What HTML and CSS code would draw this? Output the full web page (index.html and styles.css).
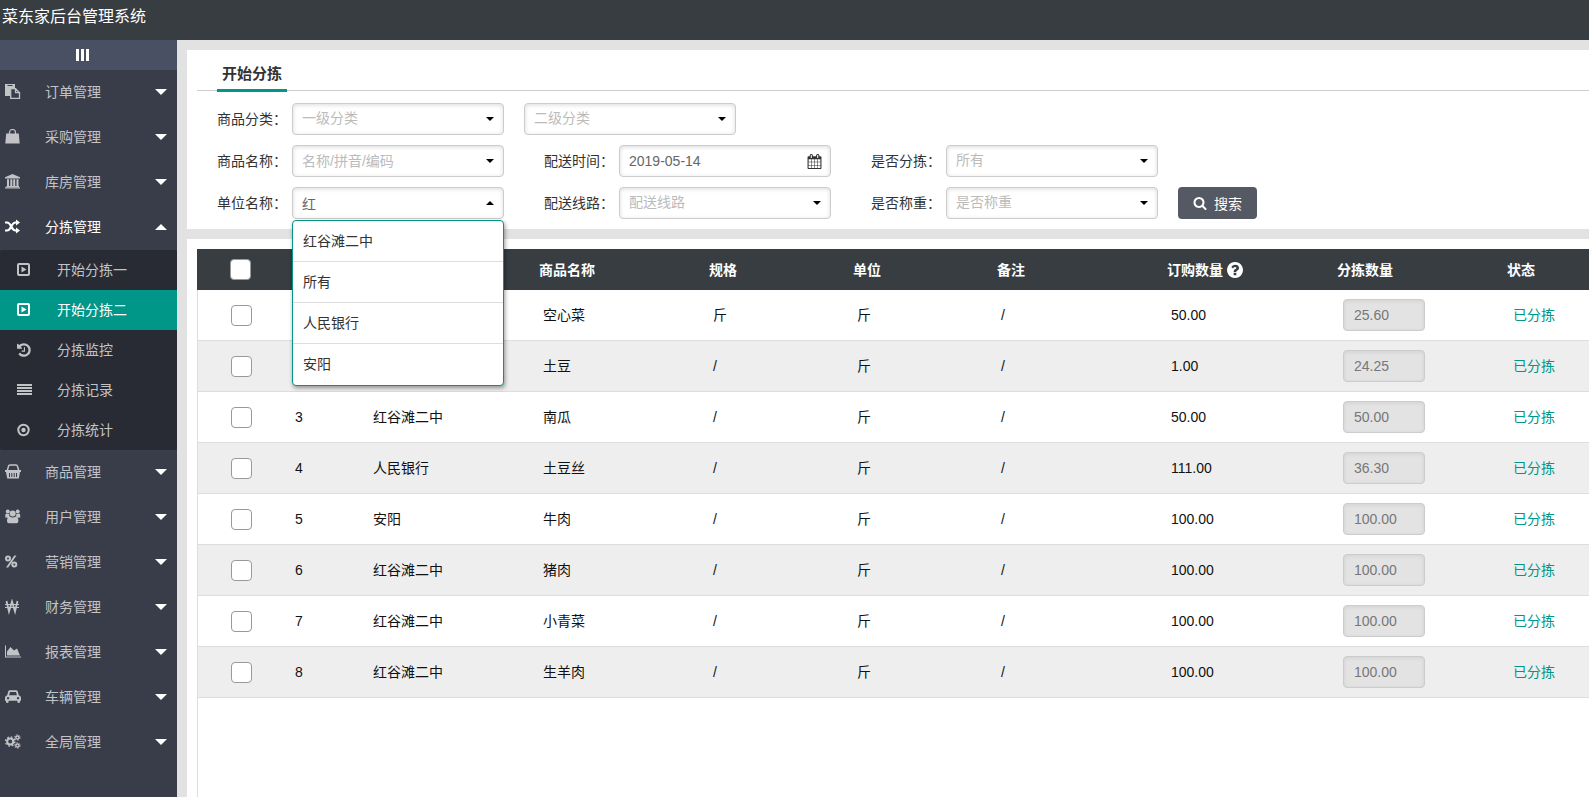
FILE: index.html
```html
<!DOCTYPE html>
<html lang="zh-CN">
<head>
    <meta charset="UTF-8">
    <meta name="viewport" content="width=device-width, initial-scale=1.0">
    <title>菜东家后台管理系统</title>
    <link rel="stylesheet" href="styles.css">
</head>
<body>
    <svg class="sprite" aria-hidden="true">
        <symbol id="i-paste" viewBox="0 0 16 16"><path d="M0 0h10v4H5v8H0zM2.500 1v1h5V1z" fill-rule="evenodd"/><path d="M5.700 4.700h4.800v4h4v5.600H5.700zM10.500 4.700l4 4" fill="none" stroke="currentColor" stroke-width="1.300"/></symbol>
        <symbol id="i-bag" viewBox="0 0 16 16"><path d="M1.200 4.500h12.600l.9 10H.3z"/><path d="M4.500 6.500V3.500a3 3 0 0 1 6 0v3" fill="none" stroke="currentColor" stroke-width="1.200"/></symbol>
        <symbol id="i-bank" viewBox="0 0 16 16"><path d="M7.500 0L15 3.200V4.500H0V3.200zM2 5.200h2v6.800h1.300V5.200h2v6.800h.9V5.200h2v6.800h1.300V5.200h2v6.800h.5v1H1.300v-1H2zM0 13.300h15V14.500H0z"/></symbol>
        <symbol id="i-random" viewBox="0 0 16 16"><path d="M0 3.500h2C6.500 3.500 6 11.500 10.500 11.500H12M0 11.500h2C6.500 11.500 6 3.500 10.500 3.500H12" fill="none" stroke="currentColor" stroke-width="2.200"/><path d="M11 .5L15 3.500l-4 3zM11 8.500L15 11.500l-4 3z"/></symbol>
        <symbol id="i-play" viewBox="0 0 16 16"><rect x="1" y="2" width="11" height="11" rx="1" fill="none" stroke="currentColor" stroke-width="2"/><path d="M4.500 4.500l5 3-5 3z"/></symbol>
        <symbol id="i-history" viewBox="128 0 1792 1792"><path d="M1664 896q0 156-61 298t-164 245-245 164-298 61q-172 0-327-72.500t-264-204.500q-7-10-6.500-22.500t8.500-20.500l137-138q10-9 25-9 16 2 23 12 73 95 179 147t225 52q104 0 198.500-40.500t163.500-109.500 109.500-163.500 40.500-198.500-40.500-198.500-109.500-163.500-163.500-109.500-198.500-40.500q-98 0-188 35.500t-160 101.500l137 138q31 30 14 69-17 40-59 40h-448q-26 0-45-19t-19-45v-448q0-42 40-59 39-17 69 14l130 129q107-101 244.500-156.500t284.500-55.500q156 0 298 61t245 164 164 245 61 298zm-640-288v448q0 14-9 23t-23 9h-320q-14 0-23-9t-9-23v-64q0-14 9-23t23-9h224v-352q0-14 9-23t23-9h64q14 0 23 9t9 23z"/></symbol>
        <symbol id="i-lines" viewBox="0 0 16 16"><path d="M0 2h15v2H0zM0 5h15v2H0zM0 8h15v2H0zM0 11h15v2H0z"/></symbol>
        <symbol id="i-dot" viewBox="0 0 16 16"><circle cx="6.500" cy="8" r="5.200" fill="none" stroke="currentColor" stroke-width="2"/><circle cx="6.500" cy="8" r="2.200"/></symbol>
        <symbol id="i-basket" viewBox="0 0 16 16"><path d="M0 6h16v2h-1l-1.200 6.500H2.200L1 8H0zM4 9v4h1V9zm2.300 0v4h1V9zm2.400 0v4h1V9zM11 9v4h1V9z" fill-rule="evenodd"/><path d="M2.300 6.500L3.500 2.200Q3.800 1 5 1h6q1.200 0 1.500 1.200l1.200 4.300" fill="none" stroke="currentColor" stroke-width="1.500"/></symbol>
        <symbol id="i-users" viewBox="0 0 16 16"><circle cx="2.800" cy="2.500" r="2"/><circle cx="12.700" cy="2.500" r="2"/><circle cx="7.700" cy="4.500" r="3"/><path d="M.3 8.500V6q0-1.500 1.200-1.500 1.300.8 2.600.3Q4 7 5 7.700q-1.500 0-2.400 1zM15.200 8.500V6q0-1.500-1.200-1.500-1.300.8-2.600.3Q11.500 7 10.500 7.700q1.500 0 2.400 1zM4.500 7.500q3.200 1.800 6.400 0 2.500.5 2.500 4.500 0 2.300-2 2.300H4q-2 0-2-2.300Q2 8 4.500 7.500z"/></symbol>
        <symbol id="i-percent" viewBox="0 0 16 16"><circle cx="3" cy="4.500" r="2" fill="none" stroke="currentColor" stroke-width="2"/><circle cx="9.300" cy="10.500" r="2" fill="none" stroke="currentColor" stroke-width="2"/><path d="M9.300 1.500h2.200L3.200 13.500H1z"/></symbol>
        <symbol id="i-won" viewBox="0 0 16 16"><path d="M1.500 2l2.500 10.500L7 2.500l3 10L12.500 2" fill="none" stroke="currentColor" stroke-width="1.800"/><path d="M0 5.500h14M0 8.500h14" fill="none" stroke="currentColor"/></symbol>
        <symbol id="i-chart" viewBox="0 0 16 16"><path d="M0 1.500h1v11h15v1H0zM2 11.500V7.500L5.500 3 9 6.500l3-2 3 7z"/></symbol>
        <symbol id="i-car" viewBox="0 0 16 16"><path d="M3.200 2.500Q3.600 1.200 5 1.200h6q1.400 0 1.800 1.300L13.800 6.200Q16 6.700 16 8.700v3h-1v1q0 1.400-1.300 1.400T12.400 12.700v-1H3.600v1q0 1.400-1.300 1.400T1 12.700v-1H0V8.700q0-2 2.200-2.500zM5 2.900l-.9 3.300h7.800L11 2.900zM3 7.900a1.200 1.200 0 1 0 .1 0zM13 7.900a1.200 1.200 0 1 0 .1 0z" fill-rule="evenodd"/></symbol>
        <symbol id="i-cogs" viewBox="0 0 16 16"><g fill="none" stroke="currentColor"><circle cx="5.200" cy="7.500" r="3" stroke-width="2"/><circle cx="5.200" cy="7.500" r="4.600" stroke-width="1.400" stroke-dasharray="1.806"/><circle cx="12.400" cy="3.500" r="1.600" stroke-width="1.500"/><circle cx="12.400" cy="3.500" r="2.700" stroke-width="1" stroke-dasharray="1.414"/><circle cx="12.400" cy="11.500" r="1.600" stroke-width="1.500"/><circle cx="12.400" cy="11.500" r="2.700" stroke-width="1" stroke-dasharray="1.414"/></g></symbol>
        <symbol id="i-search" viewBox="0 0 1792 1792"><path d="M1216 832q0-185-131.500-316.500t-316.500-131.500-316.500 131.500-131.500 316.500 131.500 316.500 316.500 131.500 316.500-131.500 131.500-316.500zm512 832q0 52-38 90t-90 38q-54 0-90-38l-343-342q-179 124-399 124-143 0-273.500-55.500t-225-150-150-225-55.500-273.500 55.500-273.500 150-225 225-150 273.500-55.500 273.500 55.500 225 150 150 225 55.500 273.500q0 220-124 399l343 343q37 37 37 90z"/></symbol>
        <symbol id="i-calendar" viewBox="0 0 1792 1792"><path d="M192 1664h288v-288h-288v288zm352 0h320v-288h-320v288zm-352-352h288v-320h-288v320zm352 0h320v-320h-320v320zm-352-384h288v-288h-288v288zm736 736h320v-288h-320v288zm-384-736h320v-288h-320v288zm768 736h288v-288h-288v288zm-384-352h320v-320h-320v320zm-352-864v-288q0-13-9.500-22.500t-22.500-9.500h-64q-13 0-22.500 9.500t-9.500 22.500v288q0 13 9.500 22.500t22.500 9.500h64q13 0 22.500-9.500t9.500-22.500zm736 864h288v-320h-288v320zm-384-384h320v-288h-320v288zm384 0h288v-288h-288v288zm32-480v-288q0-13-9.500-22.500t-22.500-9.500h-64q-13 0-22.500 9.500t-9.500 22.500v288q0 13 9.500 22.500t22.500 9.500h64q13 0 22.500-9.500t9.500-22.500zm384-64v1280q0 52-38 90t-90 38h-1408q-52 0-90-38t-38-90v-1280q0-52 38-90t90-38h128v-96q0-66 47-113t113-47h64q66 0 113 47t47 113v96h384v-96q0-66 47-113t113-47h64q66 0 113 47t47 113v96h128q52 0 90 38t38 90z"/></symbol>
        <symbol id="i-question" viewBox="128 128 1536 1536"><path d="M1024 1376v-192q0-14-9-23t-23-9h-192q-14 0-23 9t-9 23v192q0 14 9 23t23 9h192q14 0 23-9t9-23zm256-672q0-88-55.500-163t-138.500-116-170-41q-243 0-371 213-15 24 8 42l132 100q7 6 19 6 16 0 25-12 53-68 86-92 34-24 86-24 48 0 85.500 26t37.500 59q0 38-20 61t-68 45q-63 28-115.500 86.500t-52.500 125.500v36q0 14 9 23t23 9h192q14 0 23-9t9-23q0-19 21.500-49.500t54.500-49.500q32-18 49-28.500t46-35 44.500-48 28-60.500 12.500-81zm384 192q0 209-103 385.500t-279.500 279.500-385.500 103-385.500-103-279.500-279.500-103-385.500 103-385.500 279.500-279.500 385.500-103 385.500 103 279.500 279.500 103 385.500z"/></symbol>
    </svg>

    <header class="header">菜东家后台管理系统</header>

    <div class="layout">
        <aside class="sidebar">
            <button class="toggle" type="button" aria-label="收起菜单"><span class="bar"></span><span class="bar"></span><span class="bar"></span></button>
            <nav class="nav">
                <a class="nav-item" href="#"><svg class="icon"><use href="#i-paste"/></svg><span class="nav-text">订单管理</span><span class="caret"></span></a>
                <a class="nav-item" href="#"><svg class="icon"><use href="#i-bag"/></svg><span class="nav-text">采购管理</span><span class="caret"></span></a>
                <a class="nav-item" href="#"><svg class="icon"><use href="#i-bank"/></svg><span class="nav-text">库房管理</span><span class="caret"></span></a>
                <a class="nav-item open" href="#"><svg class="icon"><use href="#i-random"/></svg><span class="nav-text">分拣管理</span><span class="caret up"></span></a>
                <div class="submenu">
                    <a class="sub-item" href="#"><svg class="icon"><use href="#i-play"/></svg>开始分拣一</a>
                    <a class="sub-item active" href="#"><svg class="icon"><use href="#i-play"/></svg>开始分拣二</a>
                    <a class="sub-item" href="#"><svg class="icon"><use href="#i-history"/></svg>分拣监控</a>
                    <a class="sub-item" href="#"><svg class="icon"><use href="#i-lines"/></svg>分拣记录</a>
                    <a class="sub-item" href="#"><svg class="icon"><use href="#i-dot"/></svg>分拣统计</a>
                </div>
                <a class="nav-item" href="#"><svg class="icon"><use href="#i-basket"/></svg><span class="nav-text">商品管理</span><span class="caret"></span></a>
                <a class="nav-item" href="#"><svg class="icon"><use href="#i-users"/></svg><span class="nav-text">用户管理</span><span class="caret"></span></a>
                <a class="nav-item" href="#"><svg class="icon"><use href="#i-percent"/></svg><span class="nav-text">营销管理</span><span class="caret"></span></a>
                <a class="nav-item" href="#"><svg class="icon"><use href="#i-won"/></svg><span class="nav-text">财务管理</span><span class="caret"></span></a>
                <a class="nav-item" href="#"><svg class="icon"><use href="#i-chart"/></svg><span class="nav-text">报表管理</span><span class="caret"></span></a>
                <a class="nav-item" href="#"><svg class="icon"><use href="#i-car"/></svg><span class="nav-text">车辆管理</span><span class="caret"></span></a>
                <a class="nav-item" href="#"><svg class="icon"><use href="#i-cogs"/></svg><span class="nav-text">全局管理</span><span class="caret"></span></a>
            </nav>
        </aside>

        <main class="main">
            <section class="card filters">
                <div class="tabs"><a class="tab" href="#">开始分拣</a></div>
                <form class="form">
                    <div class="form-row">
                        <div class="field">
                            <label for="cat1">商品分类<span class="colon">：</span></label>
                            <div class="control"><select id="cat1"><option>一级分类</option></select></div>
                        </div>
                        <div class="control"><select id="cat2" aria-label="二级分类"><option>二级分类</option></select></div>
                    </div>
                    <div class="form-row">
                        <div class="field">
                            <label for="goods">商品名称<span class="colon">：</span></label>
                            <div class="control"><input type="text" id="goods" placeholder="名称/拼音/编码"></div>
                        </div>
                        <div class="field">
                            <label for="date">配送时间<span class="colon">：</span></label>
                            <div class="control date"><input type="text" id="date" value="2019-05-14"><svg class="date-icon"><use href="#i-calendar"/></svg></div>
                        </div>
                        <div class="field">
                            <label for="sorted">是否分拣<span class="colon">：</span></label>
                            <div class="control"><select id="sorted"><option>所有</option></select></div>
                        </div>
                    </div>
                    <div class="form-row">
                        <div class="field">
                            <label for="company">单位名称<span class="colon">：</span></label>
                            <div class="control open">
                                <input type="text" id="company" value="红" autocomplete="off">
                                <ul class="dropdown" role="listbox" aria-label="单位名称">
                                    <li role="option">红谷滩二中</li>
                                    <li role="option">所有</li>
                                    <li role="option">人民银行</li>
                                    <li role="option">安阳</li>
                                </ul>
                            </div>
                        </div>
                        <div class="field">
                            <label for="route">配送线路<span class="colon">：</span></label>
                            <div class="control"><select id="route"><option>配送线路</option></select></div>
                        </div>
                        <div class="field">
                            <label for="weigh">是否称重<span class="colon">：</span></label>
                            <div class="control"><select id="weigh"><option>是否称重</option></select></div>
                        </div>
                        <button class="search" type="button"><svg class="search-icon"><use href="#i-search"/></svg>搜索</button>
                    </div>
                </form>
            </section>

            <section class="card list">
                <div class="table-wrap">
                    <table class="table">
                        <colgroup>
                            <col class="col-check"><col class="col-no"><col class="col-wide"><col class="col-wide"><col class="col-mid">
                            <col class="col-mid"><col class="col-wide"><col class="col-wide"><col class="col-wide"><col class="col-state">
                        </colgroup>
                        <thead>
                            <tr>
                                <th><input type="checkbox" aria-label="全选"></th>
                                <th class="no">序号</th>
                                <th>单位名称</th>
                                <th>商品名称</th>
                                <th>规格</th>
                                <th>单位</th>
                                <th>备注</th>
                                <th>订购数量 <svg class="help"><use href="#i-question"/></svg></th>
                                <th>分拣数量</th>
                                <th>状态</th>
                            </tr>
                        </thead>
                        <tbody id="rows"></tbody>
                    </table>
                </div>
            </section>
        </main>
    </div>

    <script>
        const rows = [
            ["红谷滩二中", "空心菜", "斤", "50.00", "25.60"],
            ["红谷滩二中", "土豆", "/", "1.00", "24.25"],
            ["红谷滩二中", "南瓜", "/", "50.00", "50.00"],
            ["人民银行", "土豆丝", "/", "111.00", "36.30"],
            ["安阳", "牛肉", "/", "100.00", "100.00"],
            ["红谷滩二中", "猪肉", "/", "100.00", "100.00"],
            ["红谷滩二中", "小青菜", "/", "100.00", "100.00"],
            ["红谷滩二中", "生羊肉", "/", "100.00", "100.00"]
        ];

        document.getElementById("rows").innerHTML = rows.map((r, i) => `
            <tr>
                <td><input type="checkbox" aria-label="选择${i + 1}"></td>
                <td>${i + 1}</td>
                <td>${r[0]}</td>
                <td>${r[1]}</td>
                <td>${r[2]}</td>
                <td>斤</td>
                <td>/</td>
                <td>${r[3]}</td>
                <td class="qty-cell"><input class="qty" type="text" value="${r[4]}" aria-label="分拣数量" disabled></td>
                <td class="qty-cell state">已分拣</td>
            </tr>`).join("");
    </script>
</body>
</html>
```
FILE: styles.css
```css
* {
    box-sizing: border-box;
}
body {
    margin: 0;
    min-height: 100vh;
    display: flex;
    flex-direction: column;
    font-family: "Liberation Sans", "Noto Sans CJK SC", sans-serif;
    font-size: 14px;
    line-height: 20px;
    color: #333;
    background-color: #e2e2e2;
}
a {
    color: inherit;
    text-decoration: none;
}
input, select, button {
    font-family: inherit;
    font-size: 14px;
}
svg {
    fill: currentColor;
}
.sprite {
    display: none;
}
.header {
    height: 40px;
    padding: 5px 2px;
    font-size: 16px;
    line-height: 24px;
    color: #fff;
    background-color: #373d41;
}
.layout {
    flex: 1;
    display: flex;
}

/* sidebar */
.sidebar {
    flex: 0 0 177px;
    background-color: #393d49;
    color: #c2c3c7;
}
.toggle {
    display: flex;
    justify-content: center;
    align-items: center;
    gap: 2px;
    width: 100%;
    height: 30px;
    padding: 0 13px 0 0;
    border: 0;
    background-color: #4a5064;
}
.bar {
    width: 3px;
    height: 12px;
    background-color: #fff;
}
.nav-item {
    display: flex;
    align-items: center;
    height: 45px;
    padding: 0 10px 1px 5px;
}
.nav-item.open {
    color: #fff;
}
.icon {
    flex: none;
    width: 16px;
    height: 16px;
}
.nav-text {
    flex: 1;
    margin-left: 24px;
}
.caret {
    border: 6px solid transparent;
    border-top-color: #fff;
    border-bottom-width: 0;
}
.caret.up {
    border-top-width: 0;
    border-bottom: 6px solid #fff;
}
.submenu {
    background-color: #282b33;
    border-radius: 2px;
}
.sub-item {
    display: flex;
    align-items: center;
    gap: 24px;
    height: 40px;
    padding-left: 17px;
}
.sub-item.active {
    color: #fff;
    background-color: #009688;
}

/* filters */
.main {
    flex: 1;
    min-width: 0;
    display: flex;
    flex-direction: column;
    gap: 10px;
    padding: 10px 0 0 10px;
}
.card {
    padding: 10px 0 0 10px;
    background-color: #fff;
}
.tabs {
    display: flex;
    padding-left: 20px;
    height: 31px;
    border-bottom: 1px solid #ccc;
}
.tab {
    height: 32px;
    padding: 4px 5px 0;
    font-size: 15px;
    font-weight: bold;
    border-bottom: 3px solid #009688;
}
.form {
    display: flex;
    flex-direction: column;
    gap: 10px;
    padding: 12px 20px 10px;
}
.form-row {
    display: flex;
    flex-wrap: wrap;
    gap: 10px 20px;
}
.field {
    display: flex;
    align-items: center;
    gap: 5px;
}
.field + .field {
    margin-left: 20px;
}
/* centred full-width colon */
.colon {
    font-family: "Noto Sans CJK TC", sans-serif;
    line-height: 1;
}
.control {
    position: relative;
    width: 212px;
}
.control input, .control select {
    display: block;
    width: 100%;
    height: 32px;
    padding: 0 30px 0 9px;
    border: 1px solid #ccc;
    border-radius: 4px;
    background-color: #fff;
    box-shadow: inset 0 1px 4px rgba(0, 0, 0, 0.15);
    color: #666;
    appearance: none;
}
.control select {
    padding-bottom: 2px;
    color: #bbb;
}
.control input::placeholder {
    color: #bbb;
}
.control::after {
    content: "";
    position: absolute;
    right: 10px;
    top: 14px;
    border: 4px solid transparent;
    border-top-color: #000;
    border-bottom-width: 0;
}
.control.open::after {
    border-top-width: 0;
    border-bottom: 4px solid #000;
}
.control.date::after {
    display: none;
}
.date-icon {
    position: absolute;
    right: 9px;
    top: 9px;
    width: 15px;
    height: 15px;
}
.dropdown {
    position: absolute;
    z-index: 1;
    top: 33px;
    left: 0;
    width: 100%;
    margin: 0;
    padding: 0;
    list-style: none;
    border: 1px solid #009688;
    border-radius: 4px;
    background-color: #fff;
    box-shadow: 1px 2px 4px rgba(0, 0, 0, 0.4);
}
.dropdown li {
    height: 41px;
    padding: 10px;
    border-bottom: 1px solid #ddd;
}
.dropdown li:last-child {
    border-bottom: 0;
}
.search {
    display: flex;
    justify-content: center;
    align-items: center;
    gap: 7px;
    width: 79px;
    height: 32px;
    padding: 0 0 1px;
    border: 0;
    border-radius: 4px;
    color: #fff;
    background-color: #555963;
}
.search-icon {
    width: 14px;
    height: 14px;
}

/* sorting list */
.list {
    flex: 1;
    display: flex;
}
.table-wrap {
    flex: 1;
    border-left: 1px solid #ddd;
}
.table {
    width: calc(100% + 1px);
    margin-left: -1px;
    table-layout: fixed;
    border-collapse: separate;
    border-spacing: 0;
    color: #111;
}
.col-check {
    width: 84px;
}
.col-no {
    width: 78px;
}
.col-wide {
    width: 170px;
}
.col-mid {
    width: 144px;
}
.col-state {
    width: 92px;
}
.table th {
    height: 41px;
    padding: 0 0 0 10px;
    text-align: left;
    color: #fff;
    background-color: #373d41;
}
.table td {
    height: 51px;
    padding: 0 0 0 14px;
    border-bottom: 1px solid #ddd;
}
.table .no {
    padding-left: 14px;
}
.table tbody tr:nth-child(even) td {
    background-color: #eee;
}
.table th:first-child {
    padding-left: 33px;
}
.table td:first-child {
    padding-left: 33px;
    border-left: 1px solid #ddd;
}
.table input[type="checkbox"] {
    display: block;
    width: 21px;
    height: 21px;
    margin: 0;
    border: 1px solid #999;
    border-radius: 4px;
    background-color: #fff;
    appearance: none;
}
.help {
    width: 16px;
    height: 16px;
    vertical-align: -3px;
}
.qty {
    display: block;
    width: 82px;
    height: 32px;
    padding: 0 10px;
    border: 1px solid #ccc;
    border-radius: 4px;
    color: #777;
    background-color: #e3e3e3;
    box-shadow: inset 0 1px 4px rgba(0, 0, 0, 0.08);
}
.table .qty-cell {
    padding-left: 16px;
}
.state {
    color: #009688;
}
```
